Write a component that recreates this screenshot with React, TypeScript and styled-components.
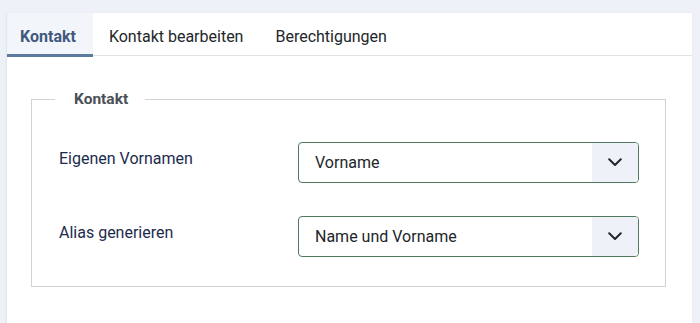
import React, { useState } from "react";
import styled, { createGlobalStyle } from "styled-components";

const Global = createGlobalStyle`
  html, body { margin: 0; padding: 0; }
  body {
    background: #eef2f8;
    font-family: Roboto, "Liberation Sans", Arial, sans-serif;
    color: #22262a;
  }
  * { box-sizing: border-box; }
`;

const Page = styled.div`
  padding: 13px 8px 0 6px;
  height: 323px;
  overflow: hidden;
`;

const Card = styled.div`
  background: #fff;
  border-left: 1px solid #e3e6ea;
  min-height: 320px;
  box-shadow: 0 0 3px rgba(0, 0, 0, 0.04);
`;

const TabList = styled.div`
  display: flex;
  height: 43px;
  border-bottom: 1px solid #dfe3e7;
`;

const Tab = styled.button<{ $active?: boolean }>`
  all: unset;
  display: flex;
  align-items: center;
  height: 42px;
  padding: 2px 16px 0 ${(p) => (p.$active ? "13px" : "16px")};
  padding-right: ${(p) => (p.$active ? "17px" : "16px")};
  font-size: 16px;
  font-weight: ${(p) => (p.$active ? 700 : 400)};
  color: ${(p) => (p.$active ? "#41597e" : "#22262a")};
  background: ${(p) => (p.$active ? "#f2f5f9" : "transparent")};
  box-shadow: ${(p) => (p.$active ? "inset 0 -3px 0 #5a7aa0" : "none")};
  cursor: pointer;
`;

const Body = styled.div`
  padding: 32px 26px 40px 24px;
`;

const Fieldset = styled.fieldset`
  margin: 0;
  border: 1px solid #cdd3d9;
  padding: 0 25px 29px 27px;
  min-width: 0;
`;

const Legend = styled.legend`
  margin-left: -4px;
  padding: 0 17px 0 19px;
  font-size: 15.5px;
  font-weight: 700;
  color: #495057;
  line-height: 22px;
`;

const Rows = styled.div`
  display: flex;
  flex-direction: column;
  gap: 33px;
  padding-top: 32px;
`;

const Row = styled.div`
  display: grid;
  grid-template-columns: 239px 341px;
  align-items: center;
`;

const Label = styled.label`
  font-size: 16px;
  color: #1c2b4c;
  padding-bottom: 8px;
`;

const SelectBox = styled.div`
  display: flex;
  height: 41px;
  border: 1px solid #4f7a5e;
  border-radius: 4px;
  overflow: hidden;
  background: #fff;
  cursor: pointer;
`;

const SelectValue = styled.div`
  flex: 1;
  display: flex;
  align-items: center;
  padding-left: 16px;
  font-size: 16px;
  color: #22262a;
`;

const Arrow = styled.div`
  width: 46px;
  display: flex;
  align-items: center;
  justify-content: center;
  background: #eef2f8;
`;

function Chevron() {
  return (
    <svg width="14" height="9" viewBox="0 0 14 9" fill="none">
      <path d="M1.2 1.3 L7 7 L12.8 1.3" stroke="#22262a" strokeWidth="2" strokeLinecap="round" strokeLinejoin="round" />
    </svg>
  );
}

function Select({ value }: { value: string }) {
  return (
    <SelectBox>
      <SelectValue>{value}</SelectValue>
      <Arrow>
        <Chevron />
      </Arrow>
    </SelectBox>
  );
}

const tabs = ["Kontakt", "Kontakt bearbeiten", "Berechtigungen"];

export default function App() {
  const [active, setActive] = useState(0);
  return (
    <>
      <Global />
      <Page>
        <Card>
          <TabList>
            {tabs.map((t, i) => (
              <Tab key={t} $active={i === active} onClick={() => setActive(i)}>
                {t}
              </Tab>
            ))}
          </TabList>
          <Body>
            <Fieldset>
              <Legend>Kontakt</Legend>
              <Rows>
                <Row>
                  <Label>Eigenen Vornamen</Label>
                  <Select value="Vorname" />
                </Row>
                <Row>
                  <Label>Alias generieren</Label>
                  <Select value="Name und Vorname" />
                </Row>
              </Rows>
            </Fieldset>
          </Body>
        </Card>
      </Page>
    </>
  );
}
